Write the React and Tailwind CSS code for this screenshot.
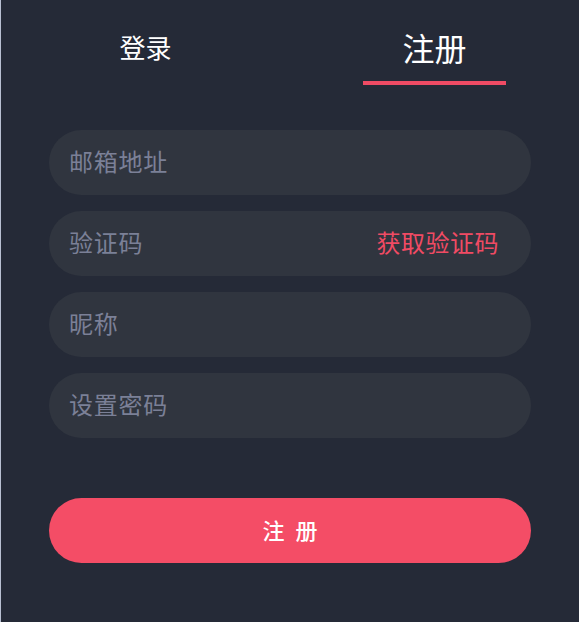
import React, { useState } from "react";

const font = { fontFamily: '"Noto Sans CJK SC", "Noto Sans", sans-serif' };

function Tab({ label, active, onClick }) {
  return (
    <button
      type="button"
      onClick={onClick}
      className="flex-1 flex flex-col items-center pt-[23px] text-white"
    >
      <span
        className={
          active
            ? "h-[48px] leading-[48px] text-[32px]"
            : "h-[48px] leading-[48px] text-[26px]"
        }
      >
        {label}
      </span>
      <span
        className={
          active
            ? "mt-[10px] h-[4px] w-[143px] bg-[#f04b64]"
            : "mt-[10px] h-[4px] w-[143px] bg-transparent"
        }
      />
    </button>
  );
}

function Field({ placeholder, action }) {
  return (
    <div className="flex items-center h-[65px] rounded-full bg-[#30353f] pl-[20px] pr-[32px] pb-[3px]">
      <input
        placeholder={placeholder}
        className="flex-1 min-w-0 bg-transparent outline-none text-[24px] tracking-[0.75px] text-white placeholder:text-[#7b8097]"
        style={font}
      />
      {action && (
        <span className="text-[24px] tracking-[0.5px] text-[#f04b64] whitespace-nowrap">
          {action}
        </span>
      )}
    </div>
  );
}

export default function App() {
  const [tab, setTab] = useState("register");
  return (
    <div
      className="min-h-screen w-full bg-[#252a37] border-l border-[#b9c0d2]"
      style={font}
    >
      <div className="flex">
        <Tab label="登录" active={tab === "login"} onClick={() => setTab("login")} />
        <Tab label="注册" active={tab === "register"} onClick={() => setTab("register")} />
      </div>

      <div className="px-[48px] pt-[45px] flex flex-col gap-[16px]">
        <Field placeholder="邮箱地址" />
        <Field placeholder="验证码" action="获取验证码" />
        <Field placeholder="昵称" />
        <Field placeholder="设置密码" />
      </div>

      <div className="px-[48px] pt-[60px]">
        <button
          type="button"
          className="w-full h-[65px] rounded-full bg-[#f44d66] text-white text-[22px] font-medium tracking-[11px] pl-[11px] pb-[3px]"
        >
          注册
        </button>
      </div>
    </div>
  );
}
